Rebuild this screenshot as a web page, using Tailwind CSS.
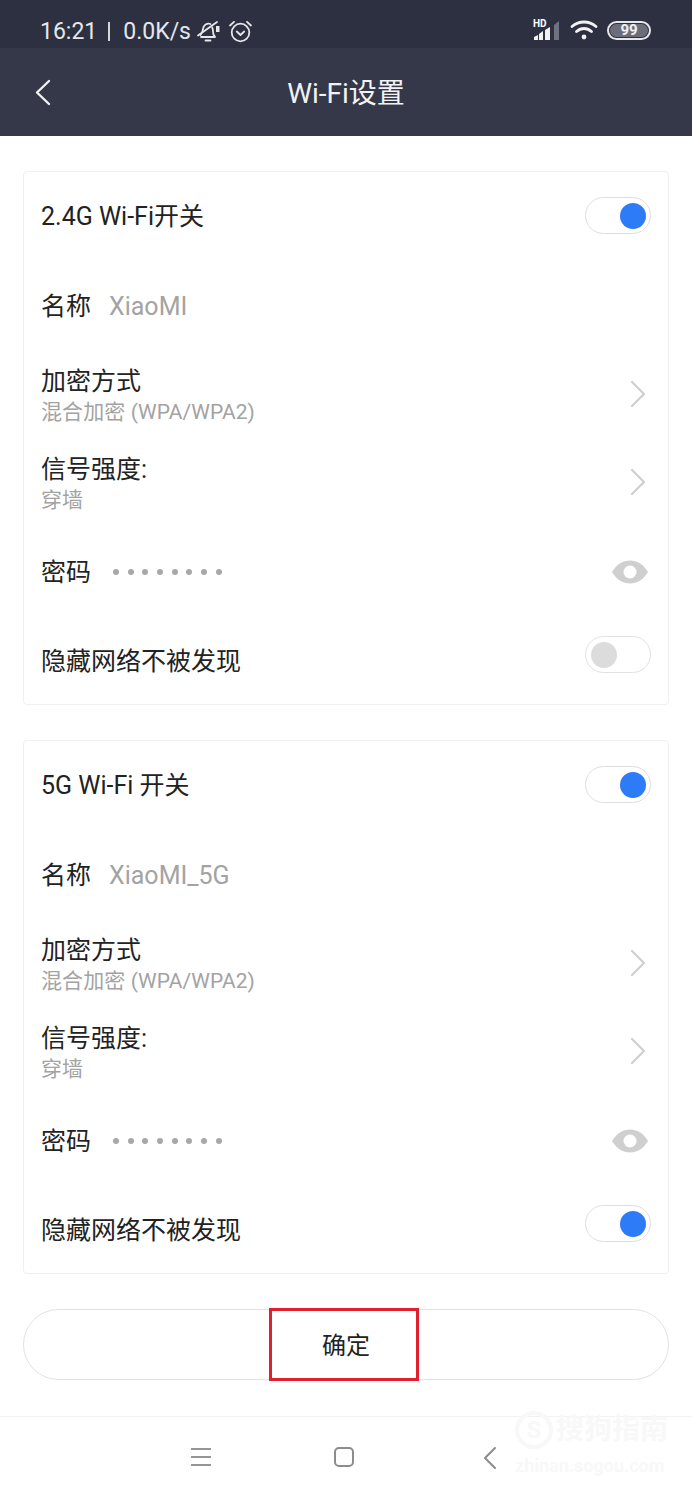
<!DOCTYPE html>
<html lang="zh-CN">
<head>
  <meta charset="UTF-8" />
  <meta name="viewport" content="width=device-width, initial-scale=1.0" />
  <title>Wi-Fi设置</title>
  <script src="https://cdn.jsdelivr.net/npm/@tailwindcss/browser@4"></script>
</head>
<body class="bg-white font-['Roboto','Noto_Sans_CJK_SC',sans-serif] text-[#222] w-[692px] h-[1499px] overflow-hidden relative">

  <!-- Status bar -->
  <div class="h-12 bg-[#2c3040] flex items-center justify-between pl-10 pr-[41px] pt-[15px] text-[#e6e7ea]">
    <div class="flex items-center text-[23px] leading-none">
      <span>16:21</span>
      <span class="w-[2px] h-[19px] bg-[#d5d6da] ml-[11px] mr-[13px]"></span>
      <span>0.0K/s</span>
      <svg class="ml-[5px]" width="26" height="24" viewBox="0 0 26 24" fill="none" stroke="#e6e7ea" stroke-width="1.800" stroke-linecap="round" stroke-linejoin="round">
        <path d="M5 17h14c-1.500-1.500-2-3-2-5.500 0-1.500-.2-2.800-.8-4" />
        <path d="M14.500 4C11 2.800 7.500 5 7 9c-.3 2.500-1 4-2.500 6" />
        <path d="M9.500 20.500h5" />
        <path d="M2 15.500 21 2" />
        <path d="M20 6h3.500v6H20z" fill="#e6e7ea" stroke="none" />
      </svg>
      <svg class="ml-[6px]" width="25" height="25" viewBox="0 0 25 25" fill="none" stroke="#e6e7ea" stroke-width="1.800" stroke-linecap="round" stroke-linejoin="round">
        <circle cx="12.500" cy="13.500" r="8.800" />
        <path d="M8.800 12.500l3.700 3.500 3.700-3.500" />
        <path d="M2 6.500 6 2.800M23 6.500 19 2.800" />
      </svg>
    </div>
    <div class="flex items-center -mt-[3px]">
      <div class="relative w-[28px] h-[21px]">
        <span class="absolute left-0 -top-[1px] text-[10px] leading-none font-bold text-white">HD</span>
        <svg class="absolute left-0 top-0" width="28" height="21" viewBox="0 0 28 21">
          <polygon points="1,17 5,15 5,20 1,20" fill="#f2f2f2" />
          <polygon points="6,14 10,11 10,20 6,20" fill="#f2f2f2" />
          <polygon points="12,10 17,7 17,20 12,20" fill="#f2f2f2" />
          <polygon points="21,5 26,1 26,20 21,20" fill="#6f7280" />
        </svg>
      </div>
      <svg class="ml-[9px]" width="28" height="20" viewBox="0 0 28 20" fill="none" stroke="#f2f2f2" stroke-width="2.800" stroke-linecap="round">
        <path d="M2 6.500c7-6 17-6 24 0" />
        <path d="M6.500 11.500c4.500-4 10.500-4 15 0" />
        <circle cx="14" cy="17" r="2.400" fill="#f2f2f2" stroke="none" />
      </svg>
      <div class="ml-[9px] w-[44px] h-[19px] rounded-full border-2 border-[#e6e7ea] p-[1px]">
        <div class="h-full rounded-full bg-[#6b6e7a] flex items-center justify-center text-[15px] font-bold leading-none text-[#f0f0f0]">99</div>
      </div>
    </div>
  </div>

  <!-- Header -->
  <div class="relative h-[88px] bg-[#343849] flex items-center justify-center">
    <svg class="absolute left-[34px] top-[31px]" width="18" height="27" viewBox="0 0 18 27" fill="none" stroke="#f2f2f4" stroke-width="2.400" stroke-linecap="round" stroke-linejoin="round">
      <path d="M15 2 3 13.500 15 25" />
    </svg>
    <h1 class="text-[28px] leading-none text-[#f2f2f4] mt-[3px]">Wi-Fi设置</h1>
  </div>

  <main class="px-[23px] pt-[35px] flex flex-col gap-[35px]">

    <!-- 2.4G card -->
    <section class="h-[534px] rounded-[4px] border border-[#f0f0f0] flex flex-col pl-[17px] pr-[17px] text-[25px] leading-none">
      <div class="flex-1 flex items-center justify-between">
        <span>2.4G Wi-Fi开关</span>
        <div class="w-[66px] h-[37px] rounded-full border border-[#dedede] flex items-center justify-end px-[4px] -mt-[1px]">
          <div class="w-[26px] h-[26px] rounded-full bg-[#2d7bf6]"></div>
        </div>
      </div>
      <div class="flex-1 flex items-center pt-[2px]">
        <span>名称</span>
        <span class="ml-[18px] text-[#a3a3a3]">XiaoMI</span>
      </div>
      <div class="flex-1 flex items-center justify-between">
        <div class="pt-[2px]">
          <div>加密方式</div>
          <div class="mt-[8px] text-[21px] tracking-[0.1px] text-[#a3a3a3]">混合加密 (WPA/WPA2)</div>
        </div>
        <svg class="mr-[5px] -mt-[2px]" width="16" height="28" viewBox="0 0 16 28" fill="none" stroke="#cfcfcf" stroke-width="2.200" stroke-linecap="round" stroke-linejoin="round">
          <path d="M2 2 14 14 2 26" />
        </svg>
      </div>
      <div class="flex-1 flex items-center justify-between">
        <div class="pt-[2px]">
          <div>信号强度:</div>
          <div class="mt-[8px] text-[21px] tracking-[0.1px] text-[#a3a3a3]">穿墙</div>
        </div>
        <svg class="mr-[5px] -mt-[2px]" width="16" height="28" viewBox="0 0 16 28" fill="none" stroke="#cfcfcf" stroke-width="2.200" stroke-linecap="round" stroke-linejoin="round">
          <path d="M2 2 14 14 2 26" />
        </svg>
      </div>
      <div class="flex-1 flex items-center justify-between">
        <div class="flex items-center pt-[2px]">
          <span>密码</span>
          <div class="ml-[22px] flex gap-[8.700px]">
            <i class="w-[6px] h-[6px] rounded-full bg-[#a8a8a8]"></i><i class="w-[6px] h-[6px] rounded-full bg-[#a8a8a8]"></i><i class="w-[6px] h-[6px] rounded-full bg-[#a8a8a8]"></i><i class="w-[6px] h-[6px] rounded-full bg-[#a8a8a8]"></i><i class="w-[6px] h-[6px] rounded-full bg-[#a8a8a8]"></i><i class="w-[6px] h-[6px] rounded-full bg-[#a8a8a8]"></i><i class="w-[6px] h-[6px] rounded-full bg-[#a8a8a8]"></i><i class="w-[6px] h-[6px] rounded-full bg-[#a8a8a8]"></i>
          </div>
        </div>
        <svg class="mr-[3px] mt-[1px]" width="36" height="24" viewBox="0 0 36 24">
          <path d="M0 12C5 4 11 .5 18 .5S31 4 36 12c-5 8-11 11.500-18 11.500S5 20 0 12Z" fill="#cfcfcf" />
          <circle cx="18" cy="12" r="6.500" fill="#fff" />
        </svg>
      </div>
      <div class="flex-1 flex items-center justify-between">
        <span class="pt-[4px]">隐藏网络不被发现</span>
        <div class="w-[66px] h-[37px] rounded-full border border-[#e2e2e2] flex items-center px-[5px] -mt-[10px]">
          <div class="w-[26px] h-[26px] rounded-full bg-[#dcdcdc]"></div>
        </div>
      </div>
    </section>

    <!-- 5G card -->
    <section class="h-[534px] rounded-[4px] border border-[#f0f0f0] flex flex-col pl-[17px] pr-[17px] text-[25px] leading-none">
      <div class="flex-1 flex items-center justify-between">
        <span>5G Wi-Fi 开关</span>
        <div class="w-[66px] h-[37px] rounded-full border border-[#dedede] flex items-center justify-end px-[4px] -mt-[1px]">
          <div class="w-[26px] h-[26px] rounded-full bg-[#2d7bf6]"></div>
        </div>
      </div>
      <div class="flex-1 flex items-center pt-[2px]">
        <span>名称</span>
        <span class="ml-[18px] text-[#a3a3a3]">XiaoMI_5G</span>
      </div>
      <div class="flex-1 flex items-center justify-between">
        <div class="pt-[2px]">
          <div>加密方式</div>
          <div class="mt-[8px] text-[21px] tracking-[0.1px] text-[#a3a3a3]">混合加密 (WPA/WPA2)</div>
        </div>
        <svg class="mr-[5px] -mt-[2px]" width="16" height="28" viewBox="0 0 16 28" fill="none" stroke="#cfcfcf" stroke-width="2.200" stroke-linecap="round" stroke-linejoin="round">
          <path d="M2 2 14 14 2 26" />
        </svg>
      </div>
      <div class="flex-1 flex items-center justify-between">
        <div class="pt-[2px]">
          <div>信号强度:</div>
          <div class="mt-[8px] text-[21px] tracking-[0.1px] text-[#a3a3a3]">穿墙</div>
        </div>
        <svg class="mr-[5px] -mt-[2px]" width="16" height="28" viewBox="0 0 16 28" fill="none" stroke="#cfcfcf" stroke-width="2.200" stroke-linecap="round" stroke-linejoin="round">
          <path d="M2 2 14 14 2 26" />
        </svg>
      </div>
      <div class="flex-1 flex items-center justify-between">
        <div class="flex items-center pt-[2px]">
          <span>密码</span>
          <div class="ml-[22px] flex gap-[8.700px]">
            <i class="w-[6px] h-[6px] rounded-full bg-[#a8a8a8]"></i><i class="w-[6px] h-[6px] rounded-full bg-[#a8a8a8]"></i><i class="w-[6px] h-[6px] rounded-full bg-[#a8a8a8]"></i><i class="w-[6px] h-[6px] rounded-full bg-[#a8a8a8]"></i><i class="w-[6px] h-[6px] rounded-full bg-[#a8a8a8]"></i><i class="w-[6px] h-[6px] rounded-full bg-[#a8a8a8]"></i><i class="w-[6px] h-[6px] rounded-full bg-[#a8a8a8]"></i><i class="w-[6px] h-[6px] rounded-full bg-[#a8a8a8]"></i>
          </div>
        </div>
        <svg class="mr-[3px] mt-[1px]" width="36" height="24" viewBox="0 0 36 24">
          <path d="M0 12C5 4 11 .5 18 .5S31 4 36 12c-5 8-11 11.500-18 11.500S5 20 0 12Z" fill="#cfcfcf" />
          <circle cx="18" cy="12" r="6.500" fill="#fff" />
        </svg>
      </div>
      <div class="flex-1 flex items-center justify-between">
        <span class="pt-[4px]">隐藏网络不被发现</span>
        <div class="w-[66px] h-[37px] rounded-full border border-[#dedede] flex items-center justify-end px-[4px] -mt-[10px]">
          <div class="w-[26px] h-[26px] rounded-full bg-[#2d7bf6]"></div>
        </div>
      </div>
    </section>

    <!-- Confirm button with red annotation box -->
    <div class="relative h-[71px] rounded-full border border-[#e2e2e2] flex items-center justify-center text-[24px] leading-none pt-[2px]">
      确定
      <div class="absolute left-[245px] -top-[2px] w-[150px] h-[73px] border-[3px] border-[#e0202e]"></div>
    </div>
  </main>

  <!-- Nav bar -->
  <nav class="absolute left-0 right-0 bottom-0 h-[83px] border-t border-[#f2f2f2]">
    <div class="absolute left-[191px] top-[31px] w-5 h-[18px] flex flex-col justify-between">
      <div class="h-[2px] bg-[#969696]"></div>
      <div class="h-[2px] bg-[#969696]"></div>
      <div class="h-[2px] bg-[#969696]"></div>
    </div>
    <div class="absolute left-[334px] top-[30px] w-5 h-5 rounded-[5px] border-2 border-[#8c8c8c]"></div>
    <svg class="absolute left-[483px] top-[29px]" width="14" height="24" viewBox="0 0 14 24" fill="none" stroke="#8c8c8c" stroke-width="2" stroke-linecap="round" stroke-linejoin="round">
      <path d="M12 2 2 12 12 22" />
    </svg>
  </nav>

  <!-- Faint watermark -->
  <div class="absolute left-[515px] top-[1411px] w-[155px] text-[#f8f8f8] pointer-events-none">
    <div class="flex items-center">
      <div class="w-[38px] h-[38px] rounded-full border-[4px] border-[#f8f8f8] flex items-center justify-center text-[24px] font-bold leading-none">S</div>
      <span class="ml-[3px] text-[28px] font-bold leading-none whitespace-nowrap">搜狗指南</span>
    </div>
    <div class="mt-[8px] text-[18px] font-bold leading-none whitespace-nowrap">zhinan.sogou.com</div>
  </div>

</body>
</html>
